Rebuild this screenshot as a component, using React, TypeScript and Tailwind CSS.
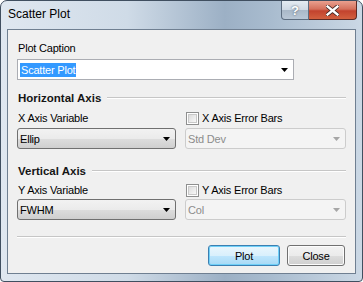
const FONT = "font-['Liberation_Sans',Arial,sans-serif]";

function Arrow({ disabled }: { disabled?: boolean }) {
  return (
    <svg width="7" height="4" viewBox="0 0 7 4" className="shrink-0">
      <path d="M0 0h7L3.5 4z" fill={disabled ? "#a6a6a6" : "#000"} />
    </svg>
  );
}

function DropDown({ value, disabled }: { value: string; disabled?: boolean }) {
  const skin = disabled
    ? "border-[#cccccc] bg-[#f4f4f4] text-[#8c8c8c]"
    : "border-[#707070] bg-[linear-gradient(#f2f2f2_0%,#ebebeb_50%,#dddddd_51%,#cfcfcf_100%)] text-black";
  return (
    <div className={"flex h-[21px] items-center justify-between rounded-[3px] border pl-[2px] pr-[5px] " + skin}>
      <span>{value}</span>
      <Arrow disabled={disabled} />
    </div>
  );
}

function CheckBox({ label }: { label: string }) {
  return (
    <label className="flex h-[14px] items-center gap-[3px]">
      <span className="flex h-[13px] w-[13px] items-center justify-center border border-[#8e8f8f] bg-white">
        <span className="h-[9px] w-[9px] border border-[#c9c9c9] bg-[linear-gradient(135deg,#dcdcdc,#f8f8f8)]" />
      </span>
      <span>{label}</span>
    </label>
  );
}

function GroupHeading({ title }: { title: string }) {
  return (
    <div className="flex h-[14px] items-center gap-[6px]">
      <span className="text-[11.5px] font-bold tracking-normal text-[#151515]">{title}</span>
      <div className="h-[2px] flex-1 border-t border-b border-t-[#c6c6c6] border-b-white" />
    </div>
  );
}

export default function App() {
  return (
    <div className={"h-[282px] w-[363px] " + FONT}>
      <div className="flex h-full flex-col rounded-t-[7px] rounded-b-[4px] border border-[#404f60] bg-[linear-gradient(90deg,#dfe7f0_0%,#cfdbe7_35%,#9cb0c5_62%,#a9bccf_75%,#cbd8e5_100%)] px-[6px] pb-[7px]">
        {/* title bar */}
        <div className="flex h-[28px] shrink-0 items-start">
          <span className="pl-[1px] pt-[6px] text-[12px] leading-[15px] text-black">Scatter Plot</span>
          <div className="ml-auto flex -mr-[1px]">
            <div className="flex h-[19px] w-[28px] items-center justify-center rounded-bl-[4px] border border-t-0 border-[#5d6d80] bg-[linear-gradient(#e4ebf2_0%,#cfd9e4_50%,#a9b8c8_51%,#b9c7d6_100%)] text-[13px] font-bold leading-none text-white [text-shadow:0_0_2px_#39475a]">
              ?
            </div>
            <div className="flex h-[19px] w-[48px] items-center justify-center rounded-br-[4px] border border-l-0 border-t-0 border-[#5d2a25] bg-[linear-gradient(#e9a08f_0%,#d4705c_45%,#c2432e_55%,#d2603f_100%)]">
              <svg width="13" height="11" viewBox="0 0 13 11">
                <path d="M1.5 1.5l10 8M11.5 1.5l-10 8" stroke="#3b2320" strokeWidth="4" strokeLinecap="square" />
                <path d="M1.5 1.5l10 8M11.5 1.5l-10 8" stroke="#fff" strokeWidth="2.4" strokeLinecap="square" />
              </svg>
            </div>
          </div>
        </div>

        {/* client area */}
        <div className="flex flex-1 flex-col border border-[#6f7f91] bg-[#f0f0f0] px-[9px] text-[11px] leading-[14px] tracking-[-0.2px] text-black">
          <div className="mt-[11px] pl-[1px]">Plot Caption</div>
          <div className="mt-[4px] flex h-[21px] w-[277px] items-center justify-between border border-[#abadb3] bg-white pl-[2px] pr-[5px]">
            <span className="bg-[#3399ff] px-[1px] text-white">Scatter Plot</span>
            <Arrow />
          </div>

          <div className="mt-[11px] pl-[1px]">
            <GroupHeading title="Horizontal Axis" />
          </div>
          <div className="mt-[6px] grid grid-cols-[159px_1fr] gap-x-[9px]">
            <div className="pl-[1px]">X Axis Variable</div>
            <div className="pl-[1px]">
              <CheckBox label="X Axis Error Bars" />
            </div>
            <div className="mt-[3px]">
              <DropDown value="Ellip" />
            </div>
            <div className="mt-[3px]">
              <DropDown value="Std Dev" disabled />
            </div>
          </div>

          <div className="mt-[15px] pl-[1px]">
            <GroupHeading title="Vertical Axis" />
          </div>
          <div className="mt-[5px] grid grid-cols-[159px_1fr] gap-x-[9px]">
            <div className="pl-[1px]">Y Axis Variable</div>
            <div className="pl-[1px]">
              <CheckBox label="Y Axis Error Bars" />
            </div>
            <div className="mt-[2px]">
              <DropDown value="FWHM" />
            </div>
            <div className="mt-[2px]">
              <DropDown value="Col" disabled />
            </div>
          </div>

          <div className="mt-[16px] h-[2px] border-t border-b border-t-[#c6c6c6] border-b-white" />

          <div className="mt-[7px] flex justify-end gap-[7px] pr-[1px]">
            <button className="h-[21px] w-[72px] rounded-[3px] border border-[#3c7fb1] bg-[linear-gradient(#eaf6fd_0%,#d9f0fc_50%,#bee6fd_51%,#a7d9f5_100%)] shadow-[inset_0_0_0_1px_#6fd0f8]">
              Plot
            </button>
            <button className="h-[21px] w-[58px] rounded-[3px] border border-[#707070] bg-[linear-gradient(#f2f2f2_0%,#ebebeb_50%,#dddddd_51%,#cfcfcf_100%)] shadow-[inset_0_0_0_1px_#fcfcfc]">
              Close
            </button>
          </div>
        </div>
      </div>
    </div>
  );
}
